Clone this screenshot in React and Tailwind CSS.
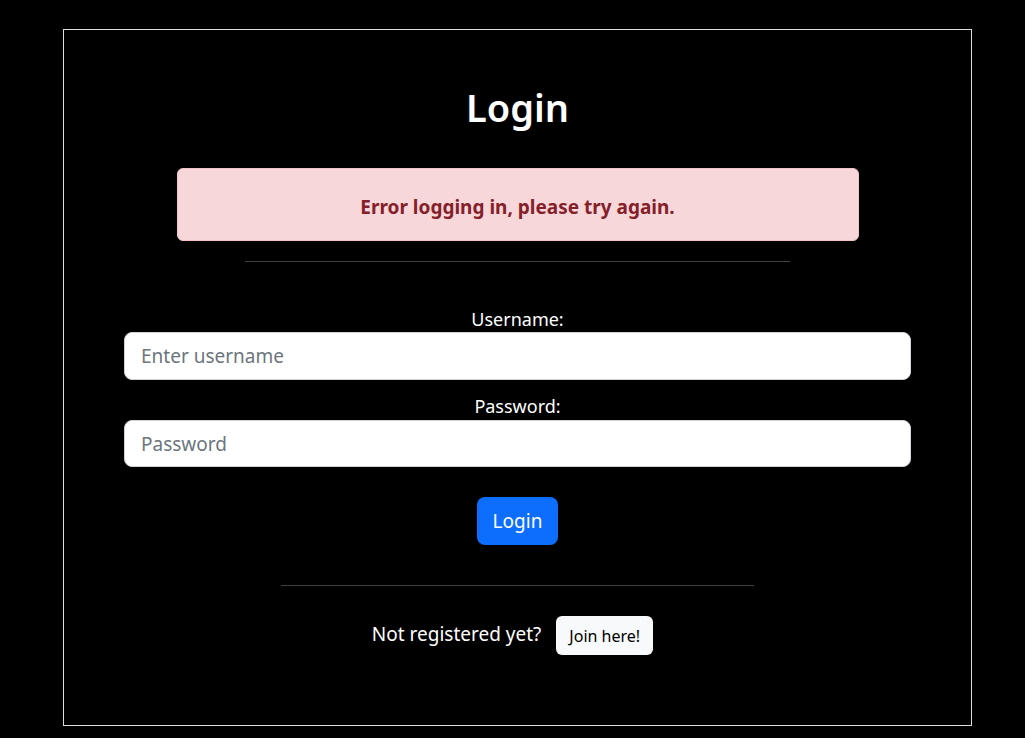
export default function App() {
  const font = { fontFamily: '"Segoe UI", "Noto Sans", "Open Sans", sans-serif' };
  return (
    <div className="min-h-[738px] w-full bg-black text-white pt-[29px]" style={font}>
      <div className="ml-[63px] w-[909px] h-[697px] border border-[#dddddd] flex flex-col items-center px-[60px]">
        <h1 className="mt-[53px] text-[38px] leading-[48px] font-semibold">Login</h1>
        <div className="mt-[37px] w-[682px] h-[73px] rounded-[6px] bg-[#f8d7da] border border-[#f5c2c7] text-[#842029] flex items-center justify-center pt-[4px]">
          <span className="text-[19px] font-bold leading-[24px]">Error logging in, please try again.</span>
        </div>
        <hr className="mt-[20px] w-[545px] border-0 border-t border-[#404040]" />
        <label className="mt-[45px] text-[18px] leading-[24px]">Username:</label>
        <input
          className="mt-[1px] w-full h-[48px] rounded-[8px] bg-white border border-[#ced4da] px-[16px] text-[19px] text-[#212529] placeholder:text-[#6c757d] outline-none"
          placeholder="Enter username"
        />
        <label className="mt-[14px] text-[18px] leading-[24px]">Password:</label>
        <input
          type="password"
          className="mt-[2px] w-full h-[47px] rounded-[8px] bg-white border border-[#ced4da] px-[16px] text-[19px] text-[#212529] placeholder:text-[#6c757d] outline-none"
          placeholder="Password"
        />
        <button className="mt-[30px] h-[48px] px-[16px] rounded-[8px] bg-[#0d6efd] text-white text-[19px] leading-[30px]">Login</button>
        <hr className="mt-[40px] w-[473px] border-0 border-t border-[#404040]" />
        <div className="mt-[30px] mr-[10px] flex items-center gap-[15px]">
          <span className="text-[19px] leading-[30px] pb-[3px]">Not registered yet?</span>
          <button className="h-[39px] px-[13px] rounded-[6px] bg-[#f8f9fa] text-black text-[16px] leading-[24px]">Join here!</button>
        </div>
      </div>
    </div>
  );
}
